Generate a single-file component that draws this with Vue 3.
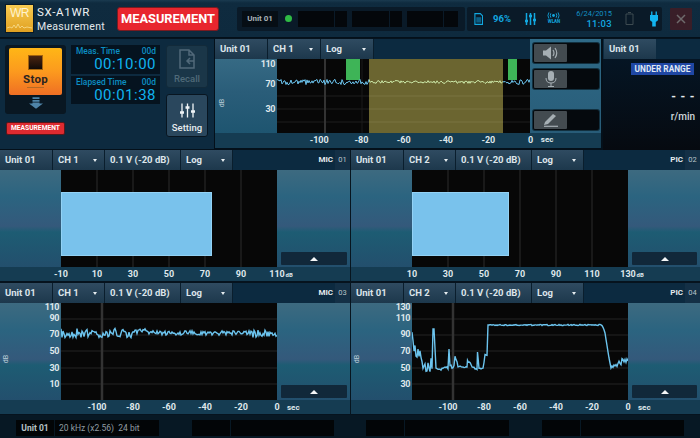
<template>
  <div class="app">
    <header class="top">
      <div class="logo">
        <span class="logo-wr">WR</span>
        <svg class="logo-wave" viewBox="0 0 27 9"><polyline points="1,6 4,5 6,6 8,3 10,6 12,2 14,6 16,4 18,6 21,5 26,6" fill="none" stroke="#fbe6a0" stroke-width=".7" /></svg>
      </div>
      <div class="title">
        <div class="title-model">SX-A1WR</div>
        <div class="title-mode">Measurement</div>
      </div>
      <div class="mode-btn">MEASUREMENT</div>

      <div class="unit-bar">
        <span class="unit-name">Unit 01</span>
        <span class="led-cell"><i class="led"></i></span>
        <i class="blk" style="width: 36px"></i>
        <i class="blk gap-sm" style="width: 12px"></i>
        <i class="blk gap-md" style="width: 37px"></i>
        <i class="blk gap-sm" style="width: 12px"></i>
        <i class="blk gap-md" style="width: 36px"></i>
        <i class="blk gap-sm" style="width: 14px"></i>
      </div>

      <div class="status-bar">
        <svg class="st-sd" viewBox="0 0 10 13"><path d="M1 .5h6l2.500 2.500v9.500h-8.500z" fill="none" stroke="#12a8e0" stroke-width="1.200" /><rect x="2.500" y="4.500" width="5.500" height="6" fill="#0c5f86" /></svg>
        <span class="st-pct">96%</span>
        <svg class="st-mix" viewBox="0 0 11 12"><g stroke="#12a8e0" stroke-width="1.500"><path d="M1.500 0v12M5.500 0v12M9.500 0v12" /><path d="M0 8h3M4 3h3M8 7h3" stroke-width="2.500" /></g></svg>
        <div class="st-wlan">
          <svg viewBox="0 0 16 8"><circle cx="8" cy="4" r="1.600" fill="#12a8e0" /><g fill="none" stroke="#12a8e0" stroke-width="1"><path d="M5 1.500q-1.500 2.500 0 5M11 1.500q1.500 2.500 0 5M2.800 .5q-2.300 3.500 0 7M13.200 .5q2.300 3.500 0 7" /></g></svg>
          <span>WLAN</span>
        </div>
        <div class="st-clock">
          <div class="st-date">6/24/2015</div>
          <div class="st-time">11:03</div>
        </div>
        <svg class="st-batt" viewBox="0 0 9 13"><path d="M3 .5h3M1 2h7v10.500h-7z" fill="none" stroke="#3d4a50" stroke-width="1" /></svg>
        <svg class="st-plug" viewBox="0 0 9 17"><path d="M2 0v4M7 0v4" stroke="#12b4f0" stroke-width="1.500" /><path d="M0 4h9v6l-2.500 2v5h-4v-5l-2.500-2z" fill="#12b4f0" /></svg>
      </div>

      <div class="close-btn">
        <svg viewBox="0 0 10 10"><path d="M1 1l8 8M9 1l-8 8" stroke="#6e6a6c" stroke-width="1.500" /></svg>
      </div>
    </header>

    <section class="monitor">
      <div class="controls">
        <div class="stop-col">
          <div class="stop-box">
            <div class="stop-btn">
              <i class="stop-square"></i>
              <span class="stop-label">Stop</span>
              <i class="stop-line"></i>
            </div>
            <svg class="stop-arrow" viewBox="0 0 16 13"><path d="M4 0h8v2h-8zM4 3h8v2h-8zM4 6h8v1h4l-8 6-8-6h4z" fill="#4f84a8" /></svg>
          </div>
          <div class="stop-badge">MEASUREMENT</div>
        </div>

        <div class="timers">
          <div class="timer">
            <div class="timer-top"><span>Meas. Time</span><span>00d</span></div>
            <div class="timer-val">00:10:00</div>
          </div>
          <div class="timer">
            <div class="timer-top"><span>Elapsed Time</span><span>00d</span></div>
            <div class="timer-val">00:01:38</div>
          </div>
        </div>

        <div class="tools">
          <div class="tool tool-off">
            <svg viewBox="0 0 16 20" width="16" height="20"><path d="M1 1h9l5 5v13h-14zM10 1v5h5" fill="none" stroke="#51697a" stroke-width="1.500" /><path d="M15 12h-7M11 9l-3 3 3 3" fill="none" stroke="#51697a" stroke-width="1.500" /></svg>
            <span>Recall</span>
          </div>
          <div class="tool">
            <svg viewBox="0 0 15 14" width="15" height="15"><g stroke="#f0f4f6" stroke-width="1.300"><path d="M2 0v14M7.500 0v14M13 0v14" /><path d="M0 9h4M5.500 4h4M11 8h4" stroke-width="2.600" /></g></svg>
            <span>Setting</span>
          </div>
        </div>
      </div>

      <div class="mon-main">
        <div class="mon-left">
          <div class="ch-head">
            <div class="tab tab-mon">Unit 01</div>
            <div class="tab tab-mon">CH 1<i class="caret"></i></div>
            <div class="tab tab-mon">Log<i class="caret"></i></div>
          </div>
          <div class="mon-body">
            <div class="mon-side">
              <span v-for="t in monTicks" :key="t.label" class="ytick" :style="{ top: t.top + 'px' }">{{ t.label }}</span>
              <span class="db-rot">dB</span>
            </div>
            <svg class="plot mon-plot" viewBox="0 0 253 74">
              <rect width="253" height="74" fill="#070707" />
              <path d="M0 37H253M0 50H253M0 63H253" stroke="#1e1e1e" />
              <path d="M48 0V74" stroke="#333" stroke-width="2" />
              <path d="M85 0V74M127 0V74M169 0V74M211 0V74" stroke="#1a1a1a" />
              <rect x="92" width="134" height="74" fill="#6b6530" />
              <path d="M92 37H226M92 50H226M92 63H226" stroke="#7a7440" />
              <rect x="69" width="14" height="21" fill="#3eb457" />
              <rect x="231" width="9" height="21" fill="#3eb457" />
              <polyline :points="monLeft" fill="none" stroke="#6cc4ee" />
              <polyline :points="monMid" fill="none" stroke="#cbe6a6" />
              <polyline :points="monRight" fill="none" stroke="#6cc4ee" />
            </svg>
          </div>
        </div>
        <div class="mon-tools">
          <div v-for="(b, i) in monBtns" :key="b" class="mon-row" :class="{ 'mon-row-last': i === 2 }">
            <div class="mon-btn">
              <svg v-if="b === 'spk'" viewBox="0 0 15 14" width="15" height="14"><path d="M0 4.500h3l5-4v13l-5-4h-3z" fill="#a6afb4" /><path d="M10 4q2 3 0 6M12 2q3.500 5 0 10" fill="none" stroke="#a6afb4" stroke-width="1.200" /></svg>
              <svg v-else-if="b === 'mic'" viewBox="0 0 12 16" width="12" height="16"><rect x="3" width="6" height="10" rx="3" fill="#a6afb4" /><path d="M1 7q0 5 5 5t5-5M6 12v3M3 15.500h6" fill="none" stroke="#a6afb4" /></svg>
              <svg v-else viewBox="0 0 16 14" width="16" height="14"><path d="M2 9l8-8 3 2-8 8-4 1z" fill="#a6afb4" /><path d="M1 13.300h14" stroke="#a6afb4" stroke-width="1.200" /></svg>
            </div>
          </div>
        </div>
        <div class="ch-axis mon-axis">
          <span v-for="t in monX" :key="t" class="xtick mon-xtick">{{ t }}</span>
          <span class="x-unit">sec</span>
        </div>
      </div>

      <div class="rate">
        <div class="rate-head"><div class="tab rate-tab">Unit 01</div></div>
        <div class="rate-body">
          <span class="under">UNDER RANGE</span>
          <span class="rate-val">---</span>
          <span class="rate-unit">r/min</span>
        </div>
      </div>
    </section>

    <section class="panels">
      <div v-for="p in panels" :key="p.no" class="ch-panel">
        <div class="ch-head">
          <div class="tab tab-unit">Unit 01</div>
          <div class="tab tab-ch">{{ p.ch }}<i class="caret"></i></div>
          <div class="tab tab-range">0.1 V (-20 dB)</div>
          <div class="tab tab-log">Log<i class="caret"></i></div>
          <div class="ch-spacer">{{ p.name }}</div>
          <div class="ch-no">{{ p.no }}</div>
        </div>
        <div class="ch-body">
          <div class="ch-side">
            <template v-if="p.yTicks">
              <span v-for="(t, i) in p.yTicks" :key="t" class="ytick" :style="{ top: yTops[i] + 'px' }">{{ t }}</span>
              <span class="db-rot db-rot-ch">dB</span>
            </template>
          </div>
          <svg class="plot" viewBox="0 0 216 97">
            <rect width="216" height="97" fill="#070707" />
            <template v-if="p.bar">
              <path d="M36 0V97M72 0V97M108 0V97M144 0V97M180 0V97" stroke="#202020" stroke-width="1.500" />
              <rect x=".5" y="22.500" :width="p.bar" height="63" fill="#79c2ec" stroke="#93d2f5" />
            </template>
            <template v-else>
              <path d="M0 16H216M0 32H216M0 48H216M0 65H216M0 81H216" stroke="#242424" />
              <path d="M41 0V97" stroke="#333" stroke-width="2.500" />
              <polyline :points="p.trace" fill="none" stroke="#6cc4ee" stroke-width="1.400" />
            </template>
          </svg>
          <div class="ch-right">
            <div class="up-btn"><i class="up"></i></div>
          </div>
        </div>
        <div class="ch-axis" :class="p.bar ? 'axis-bar' : 'axis-trend'">
          <span v-for="t in p.xTicks" :key="t" class="xtick">{{ t }}</span>
          <span v-if="p.bar" class="x-db">dB</span>
          <span v-else class="x-unit">sec</span>
        </div>
      </div>
    </section>

    <footer class="foot">
      <div class="foot-col">
        <span class="foot-unit">Unit 01</span>
        <span class="foot-info">20 kHz (x2.56)&nbsp; 24 bit</span>
        <i class="foot-blk foot-a"></i>
        <i class="foot-blk foot-b"></i>
      </div>
      <div class="foot-col">
        <span class="foot-unit"></span>
        <span class="foot-info"></span>
        <i class="foot-blk foot-a"></i>
        <i class="foot-blk foot-b"></i>
      </div>
    </footer>
  </div>
</template>

<script setup>
// small seeded generator so the traces come out the same every load
const makeRand = (seed) => {
  let s = seed
  return () => {
    s = (s * 16807) % 2147483647
    return s / 2147483647
  }
}

const toPoints = (arr) => arr.map((p) => p[0] + ',' + p[1].toFixed(1)).join(' ')

const rnd0 = makeRand(77)
const monData = []
for (let x = 0; x <= 253; x++) {
  const amp = x > 92 && x < 226 ? 1.4 : 2.6
  monData.push([x, 23 + (rnd0() - 0.5) * 2 * amp])
}
const monLeft = toPoints(monData.slice(0, 93))
const monMid = toPoints(monData.slice(92, 227))
const monRight = toPoints(monData.slice(226))

const rnd1 = makeRand(4242)
const trace3 = []
for (let x = 0; x <= 216; x++) {
  let amp = 4.5
  let base = 30
  if (x >= 76 && x < 192) amp = 2.2
  if (x >= 77 && x < 86) base = 27.5
  if (x >= 192) base = 31
  trace3.push([x, base + (rnd1() - 0.5) * 2 * amp])
}

// knots read off the reference, in plot pixels; third value = jitter after the knot
const k4 = [
  [0, 40, 11], [6, 44, 9], [10, 63, 5], [18, 64, 5], [19, 58, 5], [20, 64, 4], [21, 26, 0],
  [22, 26, 0], [24, 65, 0], [27, 67, 1], [36, 64, 2], [37, 46, 0], [38, 64, 2], [42, 64, 2],
  [43, 53, 1], [46, 63, 1], [55, 65, 1], [55.5, 58, 1], [62, 65, 1], [65, 66, 1], [65.5, 49, 0],
  [67, 66, 1], [71, 65, 1], [73, 52, 1], [75, 52, 1], [76, 22, 0], [78, 22, 0.6], [190, 22, 0.6],
  [193, 30, 0], [197, 55, 0], [199, 65, 0], [201, 61, 5], [216, 59, 5]
]
const rnd2 = makeRand(991)
const trace4 = []
for (let i = 0; i < k4.length - 1; i++) {
  const [x0, y0, n] = k4[i]
  const [x1, y1] = k4[i + 1]
  const steps = Math.max(1, Math.round(x1 - x0))
  for (let s = 0; s < steps; s++) {
    const t = s / steps
    trace4.push([+(x0 + (x1 - x0) * t).toFixed(1), y0 + (y1 - y0) * t + (rnd2() - 0.5) * 2 * n])
  }
}
trace4.push([216, 58])

const monTicks = [
  { label: '110', top: 0 },
  { label: '70', top: 20 },
  { label: '30', top: 45 },
]
const monBtns = ['spk', 'mic', 'pen']
const monX = ['-100', '-80', '-60', '-40', '-20', '0']
const yTops = [-1, 10, 26, 43, 60, 76]
const timeX = ['-100', '-80', '-60', '-40', '-20', '0']

const panels = [
  { no: '01', ch: 'CH 1', name: 'MIC', bar: 150, xTicks: ['-10', '10', '30', '50', '70', '90', '110'] },
  { no: '02', ch: 'CH 2', name: 'PIC', bar: 96, xTicks: ['10', '30', '50', '70', '90', '110', '130'] },
  { no: '03', ch: 'CH 1', name: 'MIC', trace: toPoints(trace3), yTicks: ['110', '90', '70', '50', '30', '10'], xTicks: timeX },
  { no: '04', ch: 'CH 2', name: 'PIC', trace: toPoints(trace4), yTicks: ['130', '110', '90', '70', '50', '30'], xTicks: timeX },
]
</script>

<style>
html, body { margin: 0; background: #04101a; }
</style>

<style scoped>
.app {
  width: 700px;
  height: 438px;
  overflow: hidden;
  display: flex;
  flex-direction: column;
  background: #06131e;
  font-family: Roboto, "Liberation Sans", sans-serif;
  color: #e6ecef;
}
i { display: block; font-style: normal; }

/* top bar */
.top {
  height: 38px;
  flex: none;
  display: flex;
  align-items: center;
  padding-left: 6px;
  box-sizing: border-box;
  background: linear-gradient(#1a3a4f 0, #0f2b3f 8%, #0e2a3e 100%);
  border-bottom: 1px solid #04101a;
}
.logo {
  width: 27px;
  height: 27px;
  flex: none;
  background: linear-gradient(#f8cc52, #e0a021);
  box-shadow: 0 0 0 1px #0a1a26;
  text-align: center;
}
.logo-wr {
  display: block;
  color: #fff3cf;
  font-family: "Liberation Sans", sans-serif;
  font-size: 12px;
  line-height: 17px;
  letter-spacing: -0.5px;
}
.logo-wave { display: block; width: 27px; height: 9px; }
.title { width: 80px; margin-left: 4px; flex: none; }
.title-model { font-size: 11.5px; line-height: 14px; letter-spacing: 0.7px; color: #eef2f4; }
.title-mode { font-size: 10.5px; line-height: 13px; margin-top: 1px; letter-spacing: 0.3px; color: #e2e8eb; }
.mode-btn {
  width: 102px;
  height: 24px;
  flex: none;
  box-sizing: border-box;
  background: #e8262e;
  border: 1px solid #7a1a20;
  border-radius: 3px;
  color: #fff;
  font-weight: 700;
  font-size: 12.8px;
  line-height: 22px;
  text-align: center;
}
.unit-bar {
  margin-left: 18px;
  width: 228px;
  height: 24px;
  flex: none;
  box-sizing: border-box;
  display: flex;
  align-items: center;
  background: #0a1a28;
  border-radius: 2px;
  padding: 0 3px 0 5px;
}
.unit-name {
  width: 36px;
  height: 16px;
  flex: none;
  background: #060e15;
  font-size: 8px;
  font-weight: 700;
  line-height: 16px;
  text-align: center;
  color: #a9b2b7;
}
.led-cell { width: 20px; flex: none; display: flex; justify-content: center; }
.led { width: 7px; height: 7px; border-radius: 50%; background: #2fbb45; }
.blk { height: 16px; flex: none; background: #04070b; }
.gap-sm { margin-left: 1px; }
.gap-md { margin-left: 5px; }

.status-bar {
  margin-left: 2px;
  width: 195px;
  height: 24px;
  flex: none;
  box-sizing: border-box;
  display: flex;
  align-items: center;
  background: #0a1a28;
  border-radius: 2px;
  padding-left: 7px;
  color: #12a8e0;
}
.st-sd { width: 9px; height: 12px; flex: none; }
.st-pct { margin-left: 10px; width: 20px; flex: none; font-size: 9.5px; font-weight: 700; }
.st-mix { margin-left: 12px; width: 11px; height: 12px; flex: none; }
.st-wlan { margin-left: 10px; width: 16px; flex: none; text-align: center; }
.st-wlan svg { display: block; width: 15px; height: 7px; }
.st-wlan span { display: block; font-size: 4.5px; line-height: 6px; font-weight: 700; }
.st-clock { margin-left: 10px; width: 40px; flex: none; text-align: right; }
.st-date { font-size: 7.5px; line-height: 9px; color: #1490c4; }
.st-time { font-size: 9.5px; line-height: 11px; font-weight: 500; letter-spacing: 0.3px; }
.st-batt { margin-left: 13px; width: 9px; height: 13px; flex: none; }
.st-plug { margin-left: 16px; width: 8px; height: 16px; flex: none; }

.close-btn {
  margin-left: 8px;
  width: 22px;
  height: 22px;
  flex: none;
  background: #391e28;
  border-radius: 1px;
  display: flex;
  align-items: center;
  justify-content: center;
}
.close-btn svg { width: 10px; height: 10px; }

/* upper monitor */
.monitor {
  height: 111px;
  flex: none;
  margin-top: 1px;
  display: flex;
  background: #04101a;
}
.controls {
  width: 214px;
  height: 110px;
  flex: none;
  box-sizing: border-box;
  display: flex;
  padding: 6px 0 0 5px;
  background: #0d2a3f;
}
.stop-col { width: 61px; flex: none; }
.stop-box {
  height: 69px;
  box-sizing: border-box;
  padding: 3px 4px 0;
  background: #091722;
  border-radius: 3px;
}
.stop-btn {
  height: 47px;
  box-sizing: border-box;
  padding-top: 7px;
  background: linear-gradient(#ffb616, #fc9a1e 50%, #ef6f24);
  border-radius: 2px;
  display: flex;
  flex-direction: column;
  align-items: center;
}
.stop-square {
  width: 15px;
  height: 15px;
  background: linear-gradient(#4a2410, #120b08);
  border: 1px solid #a3630e;
  box-sizing: border-box;
}
.stop-label { font-size: 11.5px; font-weight: 700; line-height: 14px; color: #2c2420; margin-top: 2px; letter-spacing: 0.3px; }
.stop-line { width: 17px; height: 1px; background: #b56a24; margin-top: 1px; }
.stop-arrow { display: block; width: 14px; height: 12px; margin: 2px auto 0; }
.stop-badge {
  margin: 8px 0 0 1px;
  height: 13px;
  width: 59px;
  box-sizing: border-box;
  background: #dd2a30;
  border: 1px solid #5a161a;
  border-radius: 2px;
  font-size: 6.7px;
  font-weight: 700;
  line-height: 11px;
  text-align: center;
  color: #fff;
}
.timers {
  margin-left: 5px;
  width: 89px;
  height: 59px;
  flex: none;
  display: flex;
  flex-direction: column;
  gap: 2px;
}
.timer { flex: 1; background: #05131f; padding: 2px 4px 0 5px; }
.timer-top {
  display: flex;
  justify-content: space-between;
  font-size: 8.4px;
  font-weight: 500;
  line-height: 9px;
  color: #0c8fc4;
}
.timer-val {
  font-size: 15px;
  line-height: 16px;
  text-align: right;
  color: #10b2ee;
  letter-spacing: 0.5px;
}
.tools {
  margin-left: 6px;
  width: 42px;
  flex: none;
  display: flex;
  flex-direction: column;
  gap: 6px;
}
.tool {
  height: 43px;
  box-sizing: border-box;
  background: #2a475d;
  border: 1px solid #081520;
  border-radius: 3px;
  display: flex;
  flex-direction: column;
  align-items: center;
  justify-content: flex-end;
  gap: 4px;
  padding-bottom: 3px;
  font-size: 9.5px;
  font-weight: 500;
}
.tool-off {
  background: #1a3648;
  border-color: #122a3a;
  color: #506a79;
}

/* tabs shared */
.ch-head { height: 20px; display: flex; background: #0c2a40; }
.tab {
  height: 20px;
  flex: none;
  box-sizing: border-box;
  border-right: 1px solid #0a1e2d;
  background: linear-gradient(#2f4b61, #1d384c);
  padding-left: 5px;
  font-size: 9.5px;
  font-weight: 700;
  line-height: 20px;
  color: #dde5ea;
  position: relative;
}
.caret {
  position: absolute;
  right: 7px;
  top: 9px;
  border-left: 2.500px solid transparent;
  border-right: 2.500px solid transparent;
  border-top: 3px solid #e6ecef;
}
.tab-mon { width: 53px; }
.mon-main {
  width: 386px;
  flex: none;
  margin-left: 1px;
  display: grid;
  grid-template-columns: 315px 71px;
  grid-template-rows: 94px 15px;
}
.mon-left { min-width: 0; }
.mon-body { height: 74px; display: flex; }
.mon-side {
  width: 62px;
  flex: none;
  position: relative;
  background: linear-gradient(#366a84, #2a5d79 45%, #1e5570);
}
.ytick {
  position: absolute;
  right: 2px;
  font-size: 9px;
  font-weight: 700;
  line-height: 10px;
  letter-spacing: -0.4px;
  color: #dfe7eb;
}
.db-rot {
  position: absolute;
  left: 3px;
  top: 40px;
  font-size: 7px;
  line-height: 8px;
  color: #bcd0da;
  transform: rotate(-90deg);
}
.db-rot-ch { left: 2px; top: 52px; }
.plot { display: block; flex: none; width: 216px; height: 97px; }
.mon-plot { width: 253px; height: 74px; }
.mon-tools {
  background: linear-gradient(#2f6a87, #285c78);
  padding: 4px 2px 0 3px;
}
.mon-row {
  height: 20px;
  background: #05090d;
  border-radius: 2px;
  margin-bottom: 6px;
  box-shadow: 0 0 0 1px #12303f;
}
.mon-row-last { margin-top: 21px; }
.mon-btn {
  width: 33px;
  height: 18px;
  margin-left: 1px;
  position: relative;
  top: 1px;
  background: #434b50;
  border-radius: 1px;
  display: flex;
  align-items: center;
  justify-content: center;
}
.ch-axis {
  display: flex;
  background: #153c52;
  font-size: 9px;
  font-weight: 700;
  color: #dfe7eb;
}
.mon-axis { grid-column: 1 / 3; padding-left: 83px; line-height: 14px; }
.xtick { width: 36px; flex: none; text-align: center; }
.mon-xtick { width: 42.300px; }
.x-unit { margin-left: -11px; font-size: 8px; }
.x-db { margin-left: -9.500px; font-size: 6px; }

.rate { flex: 1; margin-left: 2px; display: flex; flex-direction: column; }
.rate-head { height: 20px; padding-left: 1px; background: #0c2a40; flex: none; }
.rate-tab { width: 52px; border-right: 0; }
.rate-body {
  flex: 1;
  display: flex;
  flex-direction: column;
  align-items: flex-end;
  padding: 4px 5px 0 0;
  background: linear-gradient(#051524, #060a10);
}
.under {
  height: 12px;
  width: 63px;
  margin-right: 1px;
  background: #1f47a4;
  font-size: 8.3px;
  font-weight: 700;
  line-height: 12px;
  text-align: center;
  color: #dfe8f2;
}
.rate-val { margin-top: 15px; font-size: 12px; font-weight: 700; line-height: 14px; letter-spacing: 4.500px; margin-right: -4px; color: #e6ecef; }
.rate-unit { margin-top: 6px; font-size: 10px; line-height: 14px; font-weight: 500; color: #cfd8dc; }

/* four channel panels */
.panels {
  flex: none;
  height: 265px;
  display: grid;
  grid-template-columns: 351px 349px;
  grid-template-rows: 133px 132px;
}
.ch-panel { display: flex; flex-direction: column; min-width: 0; }
.ch-panel:nth-child(odd) { border-right: 1px solid #07151f; box-sizing: border-box; }
.tab-unit { width: 53px; }
.tab-ch { width: 52px; }
.tab-range { width: 76px; }
.tab-log { width: 52px; }
.ch-spacer {
  flex: 1;
  background: #0c2a40;
  text-align: right;
  padding-right: 2px;
  font-size: 8px;
  font-weight: 700;
  line-height: 20px;
}
.ch-no {
  width: 15px;
  flex: none;
  background: #143046;
  text-align: center;
  font-size: 7.5px;
  line-height: 20px;
  color: #b7c3ca;
}
.ch-body { height: 97px; flex: none; display: flex; }
.ch-side, .ch-right {
  background: linear-gradient(#3d6a80 0, #2b6480 28%, #34597b 58%, #1d5c73 64%, #234f6d 100%);
}
.ch-side { width: 61px; flex: none; position: relative; }
.ch-right {
  flex: 1;
  min-width: 0;
  display: flex;
  align-items: flex-end;
  padding: 0 3px 2px 4px;
}
.up-btn {
  flex: 1;
  height: 13px;
  background: #11283a;
  border-radius: 1px;
  display: flex;
  align-items: center;
  justify-content: center;
}
.up {
  border-left: 4px solid transparent;
  border-right: 4px solid transparent;
  border-bottom: 4px solid #f4f6f7;
}
.ch-panel .ch-axis { height: 14px; line-height: 15px; }
.axis-bar { padding-left: 43px; }
.axis-trend { padding-left: 79px; }
.axis-trend .x-unit { margin-left: -8px; }

/* bottom strip */
.foot {
  flex: 1;
  display: flex;
  background: #071824;
  padding-top: 5px;
}
.foot-col { width: 350px; flex: none; display: flex; padding-left: 16px; box-sizing: border-box; height: 16px; }
.foot-unit {
  width: 38px;
  flex: none;
  background: #020507;
  text-align: center;
  font-size: 8.5px;
  font-weight: 700;
  line-height: 16px;
  color: #b8c2c8;
}
.foot-info {
  width: 104px;
  flex: none;
  margin-left: 1px;
  padding-left: 4px;
  box-sizing: border-box;
  background: #020507;
  font-size: 8.5px;
  line-height: 16px;
  color: #909ca3;
}
.foot-blk { height: 16px; flex: none; background: #020507; }
.foot-a { width: 38px; margin-left: 33px; }
.foot-b { width: 103px; margin-left: 1px; }
</style>
